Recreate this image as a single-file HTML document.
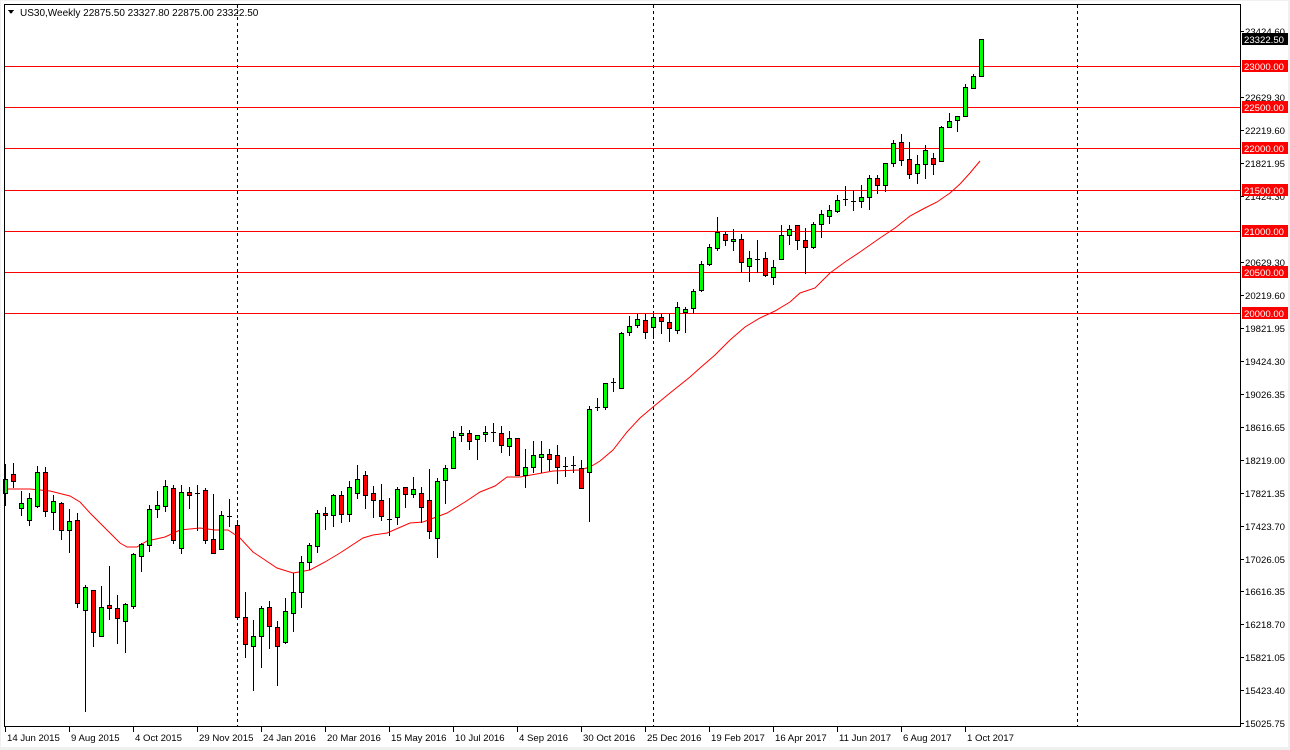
<!DOCTYPE html>
<html><head><meta charset="utf-8"><style>
html,body{margin:0;padding:0;background:#fff;}
body{width:1290px;height:750px;overflow:hidden;position:relative;font-family:"Liberation Sans",sans-serif;}
svg{position:absolute;left:0;top:0;}
svg text{font-family:"Liberation Sans",sans-serif;font-size:9.6px;fill:#000;}
</style></head><body>
<svg id="s" width="1290" height="750" xmlns="http://www.w3.org/2000/svg" shape-rendering="crispEdges">
<rect x="0" y="0" width="1290" height="750" fill="#f0f0f0"/>
<rect x="1" y="1" width="1287" height="746" fill="#fff"/>
<g id="grid" stroke="#000" stroke-dasharray="3,3" stroke-width="1">
<line x1="237.5" y1="5" x2="237.5" y2="727"/>
<line x1="653.5" y1="5" x2="653.5" y2="727"/>
<line x1="1077.5" y1="5" x2="1077.5" y2="727"/>
</g>
<g stroke="#ff0000" stroke-width="1">
<line x1="4" y1="66.5" x2="1241" y2="66.5"/>
<line x1="4" y1="107.5" x2="1241" y2="107.5"/>
<line x1="4" y1="148.5" x2="1241" y2="148.5"/>
<line x1="4" y1="190.5" x2="1241" y2="190.5"/>
<line x1="4" y1="231.5" x2="1241" y2="231.5"/>
<line x1="4" y1="272.5" x2="1241" y2="272.5"/>
<line x1="4" y1="313.5" x2="1241" y2="313.5"/>
</g>
<polyline id="ma" fill="none" stroke="#ff0000" stroke-width="1" shape-rendering="auto" points=""/>
<g id="c"></g>
<rect x="4.5" y="4.5" width="1236" height="722" fill="none" stroke="#000"/>
<g id="ax"></g>
<text x="20" y="16" style="font-size:10px">US30,Weekly  22875.50 23327.80 22875.00 23322.50</text>
<polygon points="8,10 14,10 11,14" fill="#000"/>
</svg>
<script>
var S=document.getElementById('s'),C=document.getElementById('c'),AX=document.getElementById('ax');
var NS='http://www.w3.org/2000/svg';
function el(p,t,a,txt){var e=document.createElementNS(NS,t);for(var k in a)e.setAttribute(k,a[k]);if(txt)e.textContent=txt;p.appendChild(e);return e;}
var d=[
[493,479,464,505],[474,481,463,487],[508,503,491,515],[520,498,493,525],[506,472,466,507],[472,511,467,516],[512,501,495,529],[503,530,502,539],[530,521,509,552],[520,603,513,607],
[610,587,585,711],[590,632,590,646],[636,607,586,636],[605,608,566,619],[608,618,595,643],[621,604,603,652],[606,554,553,608],[556,544,543,571],[545,509,505,551],[509,505,491,517],
[506,486,480,511],[488,540,485,543],[548,492,485,553],[492,495,487,508],[493,493,485,530],[490,540,488,543],[539,553,494,553],[549,515,511,549],[516,516,499,526],[525,617,520,617],
[617,644,592,657],[646,636,620,690],[636,608,606,667],[607,626,601,648],[627,646,621,685],[642,611,598,643],[613,592,573,631],[592,562,556,607],[562,545,543,569],[546,513,510,552],
[513,515,507,529],[515,495,494,526],[495,514,491,522],[514,487,481,521],[493,479,465,498],[475,495,471,508],[493,500,486,517],[500,516,484,520],[519,519,498,535],[517,489,487,524],
[487,494,487,507],[494,489,477,497],[493,507,487,522],[500,531,469,538],[538,481,478,557],[480,468,465,503],[468,437,431,468],[435,433,426,441],[433,441,430,449],[439,435,435,459],
[434,432,426,441],[432,432,423,441],[433,445,426,452],[446,438,431,455],[438,475,438,475],[475,467,449,487],[467,455,441,472],[457,454,441,472],[454,459,449,470],[455,467,445,483],
[466,466,457,476],[465,465,456,472],[468,488,460,488],[472,409,406,521],[407,407,398,410],[407,383,383,409],[382,382,378,391],[388,333,332,388],[332,326,316,335],[325,319,314,327],
[320,332,314,338],[327,317,314,338],[317,321,314,333],[322,328,314,341],[330,307,302,333],[312,309,307,332],[308,291,289,313],[290,264,261,291],[264,247,244,265],[248,232,217,250],
[234,240,232,245],[241,239,229,250],[239,262,234,271],[266,258,251,281],[259,259,240,272],[258,275,252,276],[277,267,260,284],[259,235,225,259],[235,229,225,244],[225,240,225,249],
[240,247,228,273],[247,224,222,248],[224,214,210,237],[216,210,205,223],[211,200,195,212],[199,199,186,205],[201,201,190,210],[201,197,185,207],[197,178,175,209],[178,185,175,193],
[185,163,163,191],[163,143,140,166],[142,160,134,165],[159,174,142,178],[173,164,155,183],[164,150,145,178],[158,164,153,174],[161,127,126,161],[127,121,113,127],[120,116,116,131],
[116,87,84,116],[88,76,74,88],[76,39,39,76]];
for(var i=0;i<d.length;i++){
 var x=5+8*i,o=d[i][0],c=d[i][1],h=d[i][2],l=d[i][3];
 el(C,'line',{x1:x+.5,y1:h,x2:x+.5,y2:l+1,stroke:'#000'});
 var t=Math.min(o,c),b=Math.max(o,c);
 if(b-t<1){el(C,'line',{x1:x-2,y1:t+.5,x2:x+3,y2:t+.5,stroke:'#000'});}
 else el(C,'rect',{x:x-1.5,y:t+.5,width:4,height:b-t,fill:o>c?'#00ff00':'#ff0000',stroke:'#000'});
}
var ma=[[5,489],[30,489],[50,491],[70,496],[80,502],[90,513],[100,523],[110,533],[120,543],[127,547],[137,547],[147,541],[165,537],[180,530],[200,528],[215,530],[228,530],[240,538],[253,552],[265,560],[277,568],[293,573],[310,570],[325,562],[340,553],[363,538],[373,535],[387,533],[410,523],[423,522],[447,513],[465,502],[480,492],[495,486],[507,477],[520,477],[553,471],[580,470],[590,467],[600,461],[613,450],[627,432],[640,418],[653,407],[670,393],[690,377],[700,368],[715,355],[730,340],[745,327],[760,318],[775,311],[790,302],[800,293],[815,288],[830,273],[845,262],[860,252],[880,238],[895,228],[910,216],[923,209],[937,202],[950,193],[960,184],[970,173],[980,161]];
document.getElementById('ma').setAttribute('points',ma.map(function(p){return p.join(',')}).join(' '));
var labels=[[31,'23424.60'],[97,'22629.30'],[130,'22219.60'],[163,'21821.95'],[196,'21424.30'],[262,'20629.30'],[295,'20219.60'],[328,'19821.95'],[361,'19424.30'],[394,'19026.35'],[427,'18616.65'],[460,'18219.00'],[493,'17821.35'],[526,'17423.70'],[559,'17026.05'],[591,'16616.35'],[624,'16218.70'],[657,'15821.05'],[690,'15423.40'],[723,'15025.75']];
labels.forEach(function(a){el(AX,'line',{x1:1241,y1:a[0]+.5,x2:1244,y2:a[0]+.5,stroke:'#000'});el(AX,'text',{x:1245,y:a[0]+4},a[1]);});
var red=[[66,'23000.00'],[107,'22500.00'],[148,'22000.00'],[190,'21500.00'],[231,'21000.00'],[272,'20500.00'],[313,'20000.00']];
red.forEach(function(a){el(AX,'rect',{x:1242,y:a[0]-6,width:46,height:12,fill:'#ff0000'});el(AX,'text',{x:1244,y:a[0]+4,style:'fill:#fff'},a[1]);});
el(AX,'rect',{x:1242,y:33,width:46,height:12,fill:'#000'});el(AX,'text',{x:1244,y:43,style:'fill:#fff'},'23322.50');
var dates=['14 Jun 2015','9 Aug 2015','4 Oct 2015','29 Nov 2015','24 Jan 2016','20 Mar 2016','15 May 2016','10 Jul 2016','4 Sep 2016','30 Oct 2016','25 Dec 2016','19 Feb 2017','16 Apr 2017','11 Jun 2017','6 Aug 2017','1 Oct 2017'];
dates.forEach(function(t,k){var x=5+64*k;el(AX,'line',{x1:x+.5,y1:727,x2:x+.5,y2:732,stroke:'#000'});el(AX,'text',{x:x+2,y:741},t);});
</script>
</body></html>
